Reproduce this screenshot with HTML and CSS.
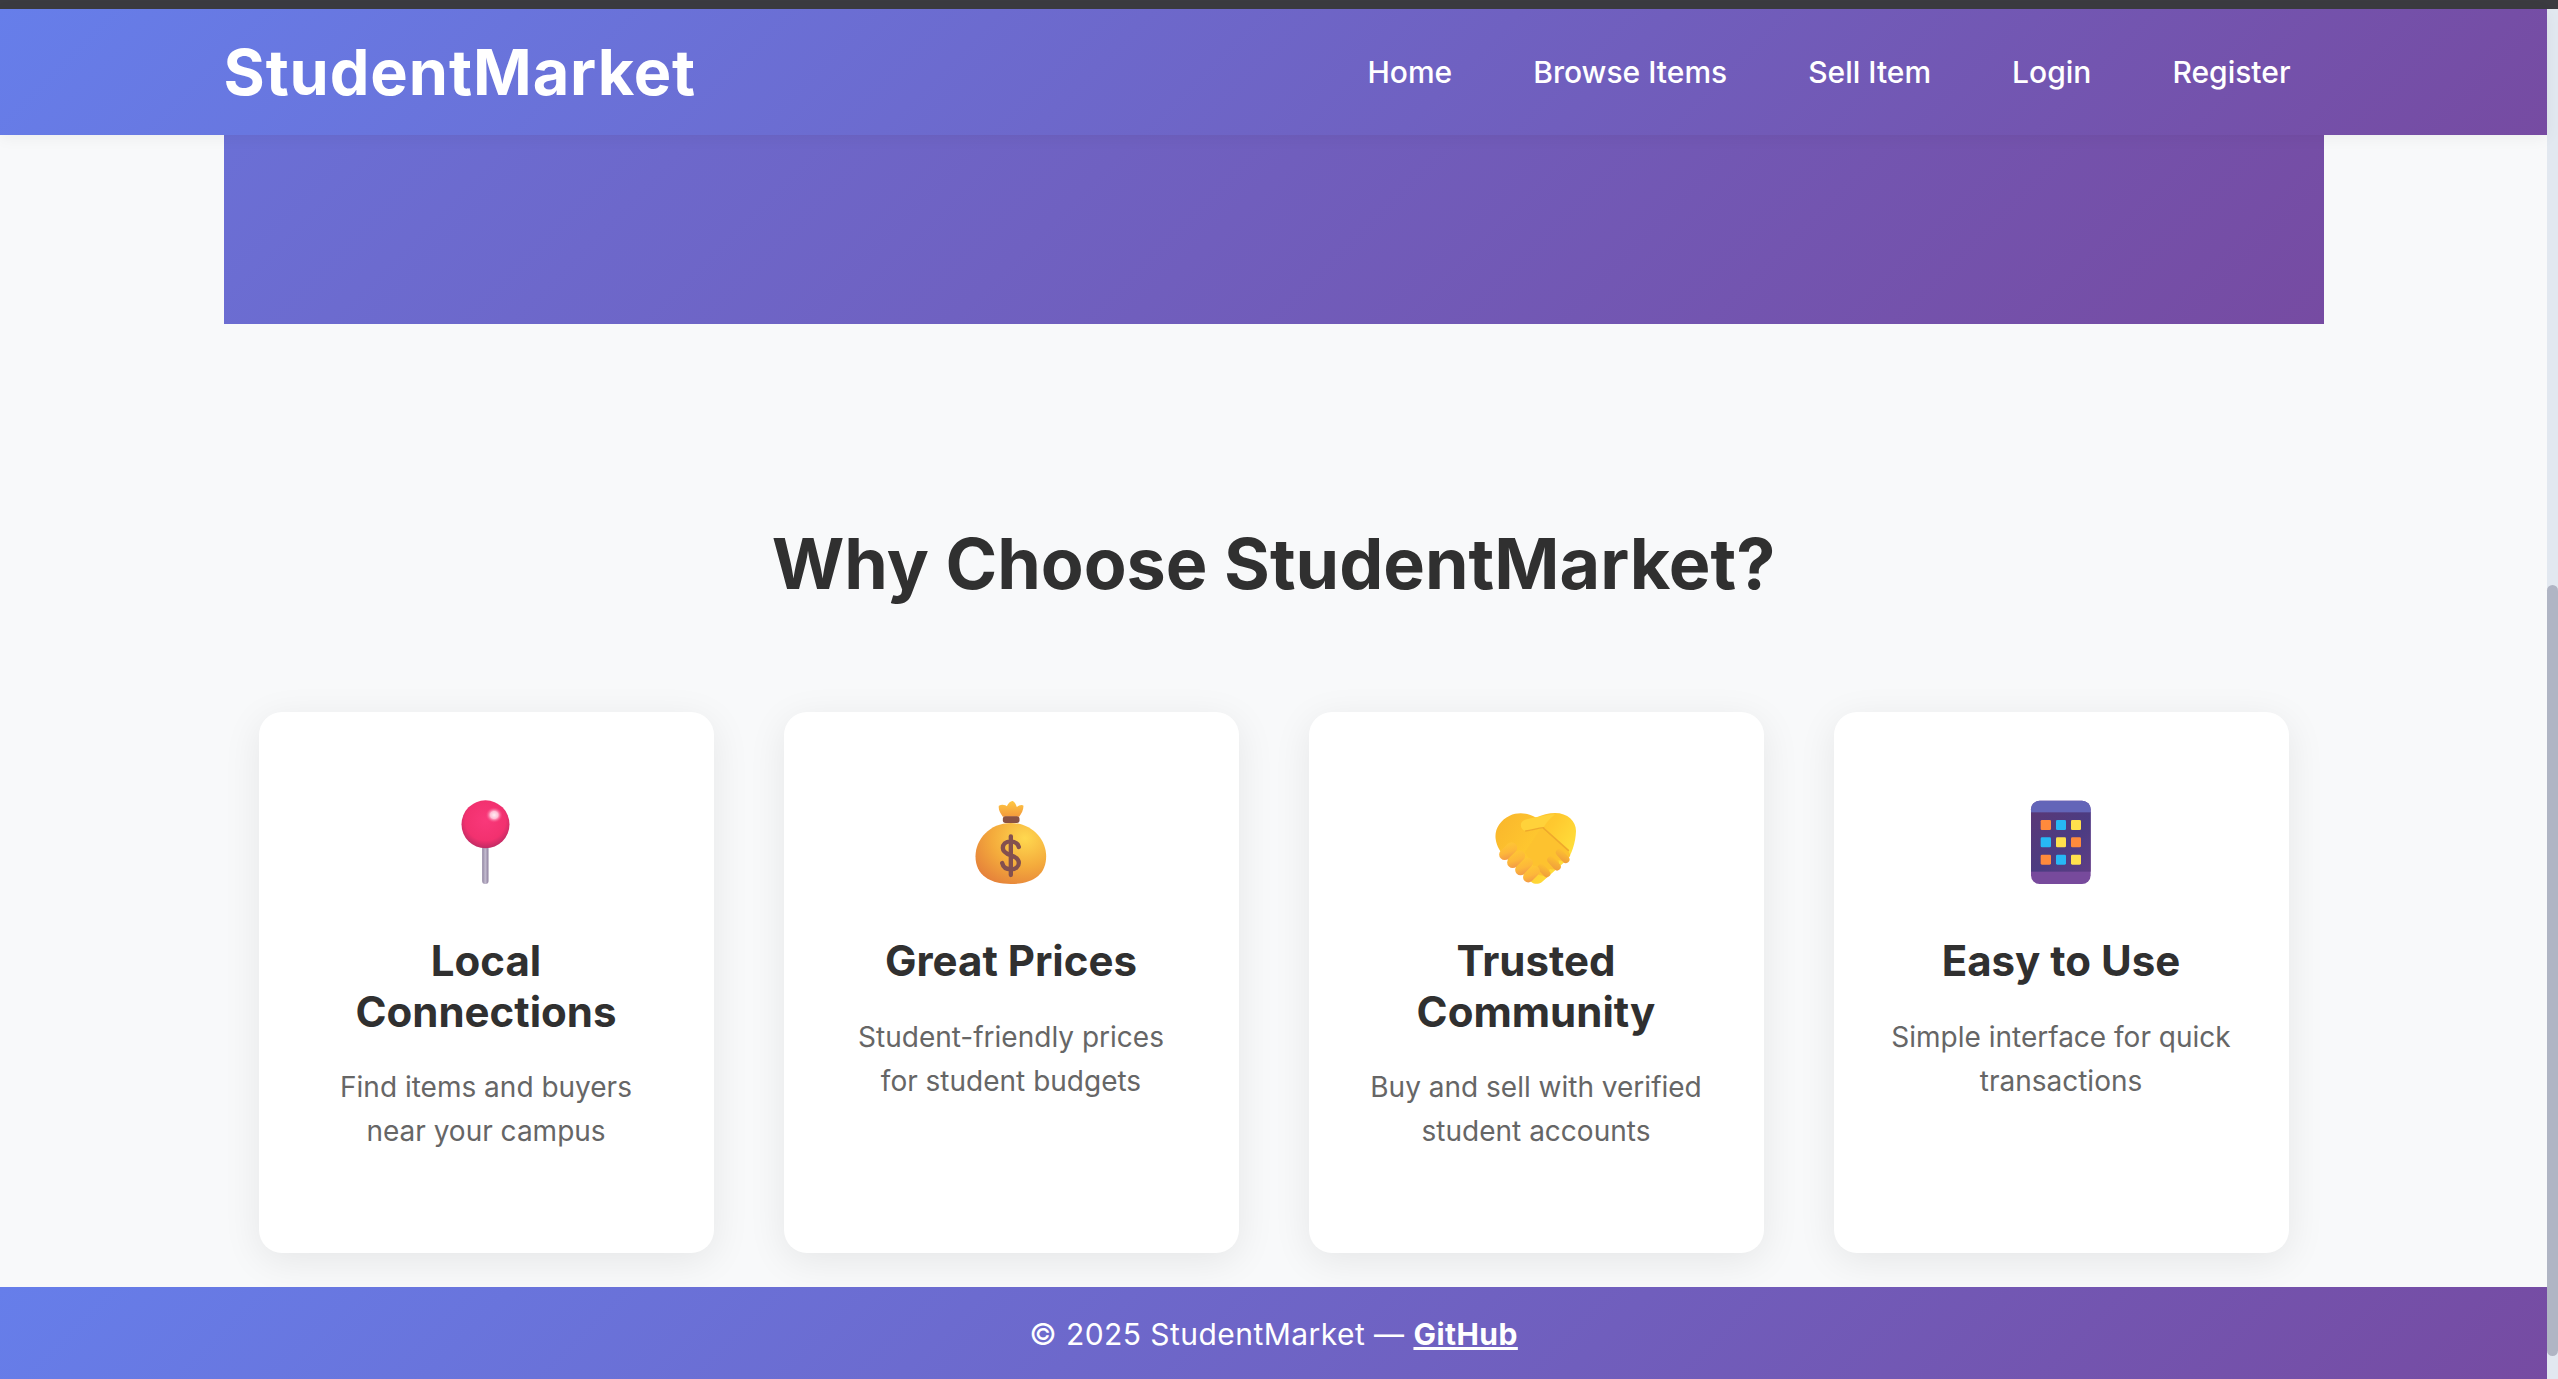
FILE: index.html
```html
<!DOCTYPE html>
<html lang="en">
<head>
  <meta charset="UTF-8">
  <meta name="viewport" content="width=device-width, initial-scale=1.0">
  <title>StudentMarket</title>
  <link rel="stylesheet" href="styles.css">
</head>
<body>
  <div class="window-edge"></div>
  <div class="viewport">
    <div class="page">
      <header class="site-header">
        <div class="header-inner">
          <a class="logo" href="#">StudentMarket</a>
          <nav class="nav">
            <a href="#">Home</a>
            <a href="#">Browse Items</a>
            <a href="#">Sell Item</a>
            <a href="#">Login</a>
            <a href="#">Register</a>
          </nav>
        </div>
      </header>

      <main class="main">
        <div class="hero"></div>

        <section class="features">
          <h2 class="features-title">Why Choose StudentMarket?</h2>
          <div class="feature-grid">
            <div class="card">
              <svg class="card-icon" viewBox="55.5 54 288 288" aria-hidden="true">
                <defs>
                  <linearGradient id="pinStem" x1="0" x2="1" y1="0" y2="0">
                    <stop offset="0" stop-color="#8f84a0"/>
                    <stop offset=".5" stop-color="#c3bbcf"/>
                    <stop offset="1" stop-color="#8d7f9e"/>
                  </linearGradient>
                  <radialGradient id="pinBall" cx=".5" cy=".42" r=".6">
                    <stop offset="0" stop-color="#f9387a"/>
                    <stop offset=".7" stop-color="#f2316f"/>
                    <stop offset="1" stop-color="#b92a62"/>
                  </radialGradient>
                  <radialGradient id="pinShine">
                    <stop offset="0" stop-color="#ffeef4"/>
                    <stop offset=".45" stop-color="#ffc0d6"/>
                    <stop offset="1" stop-color="#f9387a" stop-opacity="0"/>
                  </radialGradient>
                </defs>
                <rect x="188" y="200" width="19" height="115" rx="9" fill="url(#pinStem)"/>
                <circle cx="198" cy="136" r="72" fill="url(#pinBall)"/>
                <ellipse cx="224" cy="108" rx="26" ry="24" fill="url(#pinShine)"/>
              </svg>
              <h3>Local Connections</h3>
              <p>Find items and buyers near your campus</p>
            </div>

            <div class="card">
              <svg class="card-icon" viewBox="40.5 54 288 288" aria-hidden="true">
                <defs>
                  <radialGradient id="bagBody" cx=".7" cy=".25" r=".85">
                    <stop offset="0" stop-color="#ffd84f"/>
                    <stop offset=".55" stop-color="#f4ab3c"/>
                    <stop offset="1" stop-color="#e5813a"/>
                  </radialGradient>
                  <linearGradient id="bagKnot" x1="0" x2="0" y1="0" y2="1">
                    <stop offset="0" stop-color="#ffc843"/>
                    <stop offset="1" stop-color="#f39a3c"/>
                  </linearGradient>
                </defs>
                <path d="M184 132C120 132 78 182 78 232C78 288 120 315 184 315C250 315 290 288 290 232C290 182 248 132 184 132Z" fill="url(#bagBody)"/>
                <path d="M160 113C152 102 146 92 148 80C160 74 170 80 172 82C176 72 184 65 190 66C197 70 200 78 202 84C208 80 216 76 222 80C222 92 216 104 209 113Z" fill="url(#bagKnot)"/>
                <rect x="160" y="112" width="50" height="20" rx="8" fill="#8a5243"/>
                <path d="M208 204C204 192 194 187 183 187C168 187 160 197 160 207C160 218 170 224 184 229C198 234 208 240 208 252C208 263 198 271 184 271C171 271 161 265 158 252M184 172V288" fill="none" stroke="#83504f" stroke-width="13" stroke-linecap="round"/>
              </svg>
              <h3>Great Prices</h3>
              <p>Student-friendly prices for student budgets</p>
            </div>

            <div class="card">
              <svg class="card-icon" viewBox="39 24 288 288" aria-hidden="true">
                <defs>
                  <linearGradient id="handBack" x1="0" x2="1" y1="0" y2=".6">
                    <stop offset="0" stop-color="#f9b52c"/>
                    <stop offset=".6" stop-color="#ffc92f"/>
                    <stop offset="1" stop-color="#ffe23d"/>
                  </linearGradient>
                  <linearGradient id="finger" x1="1" x2="0" y1="0" y2="1">
                    <stop offset="0" stop-color="#ffc933"/>
                    <stop offset=".55" stop-color="#fdb73a"/>
                    <stop offset="1" stop-color="#f0924a"/>
                  </linearGradient>
                  <linearGradient id="fingerRight" x1="0" x2="1" y1="0" y2="1">
                    <stop offset="0" stop-color="#ffc42f"/>
                    <stop offset="1" stop-color="#ee9a3e"/>
                  </linearGradient>
                </defs>
                <path d="M184 86C160 72 130 68 104 80C74 94 58 122 62 150C65 172 76 190 92 206L170 280C178 286 190 286 200 280L272 216C290 200 302 160 303 126C303 96 278 72 240 72C222 72 200 78 184 86Z" fill="url(#handBack)"/>
                <path d="M150 190L198 118L278 182L286 198C280 214 262 218 250 214C258 232 240 246 224 240C222 258 204 266 190 256Z" fill="#fdc22f"/>
                <path d="M206 118L280 184" fill="none" stroke="#efa92c" stroke-width="5" stroke-linecap="round"/>
                <path d="M150 92C170 88 205 78 240 76C222 92 214 100 206 116C186 118 170 124 152 126C134 122 132 98 150 92Z" fill="#ffd23a"/>
                <path d="M152 126C170 124 186 118 206 116" fill="none" stroke="#efa92c" stroke-width="4" stroke-linecap="round"/>
                <g fill="url(#fingerRight)">
                  <rect x="238" y="190" width="50" height="22" rx="11" transform="rotate(48 263 201)"/>
                  <rect x="212" y="212" width="50" height="22" rx="11" transform="rotate(48 237 223)"/>
                  <rect x="184" y="234" width="46" height="22" rx="11" transform="rotate(48 207 245)"/>
                </g>
                <g fill="url(#finger)">
                  <rect x="140" y="240" width="58" height="31" rx="15" transform="rotate(-45 169 255)"/>
                  <rect x="116" y="216" width="62" height="32" rx="16" transform="rotate(-45 147 232)"/>
                  <rect x="92" y="194" width="62" height="33" rx="16" transform="rotate(-45 123 210)"/>
                  <rect x="68" y="170" width="62" height="33" rx="16" transform="rotate(-45 99 186)"/>
                </g>
              </svg>
              <h3>Trusted Community</h3>
              <p>Buy and sell with verified student accounts</p>
            </div>

            <div class="card">
              <svg class="card-icon" viewBox="39 54 288 288" aria-hidden="true">
                <defs>
                  <linearGradient id="phoneScreen" x1="0" x2="1" y1="0" y2="1">
                    <stop offset="0" stop-color="#5a3877"/>
                    <stop offset=".55" stop-color="#4b3c82"/>
                    <stop offset="1" stop-color="#5f3d84"/>
                  </linearGradient>
                </defs>
                <rect x="93" y="65" width="179" height="250" rx="26" fill="#774a9c"/>
                <path d="M93 102V91C93 76 105 65 119 65H246C260 65 272 76 272 91V102Z" fill="#6365b8"/>
                <rect x="93" y="100" width="179" height="178" fill="url(#phoneScreen)"/>
                <rect x="122" y="123" width="31" height="30" rx="4" fill="#ff8a3c"/>
                <rect x="168" y="123" width="30" height="30" rx="4" fill="#27b8f5"/>
                <rect x="213" y="123" width="30" height="30" rx="4" fill="#ffe04d"/>
                <rect x="122" y="175" width="31" height="30" rx="4" fill="#27b8f5"/>
                <rect x="168" y="175" width="30" height="30" rx="4" fill="#ffe04d"/>
                <rect x="213" y="175" width="30" height="30" rx="4" fill="#ff8a3c"/>
                <rect x="122" y="227" width="31" height="30" rx="4" fill="#ff8a3c"/>
                <rect x="168" y="227" width="30" height="30" rx="4" fill="#27b8f5"/>
                <rect x="213" y="227" width="30" height="30" rx="4" fill="#ffe04d"/>
              </svg>
              <h3>Easy to Use</h3>
              <p>Simple interface for quick transactions</p>
            </div>
          </div>
        </section>
      </main>

      <footer class="site-footer">
        <p>© 2025 StudentMarket — <a href="#">GitHub</a></p>
      </footer>
    </div>

    <div class="scrollbar">
      <div class="scrollbar-thumb"></div>
    </div>
  </div>
</body>
</html>
```

FILE: styles.css
```css
* {
  box-sizing: border-box;
}

html, body {
  height: 100%;
}

body {
  margin: 0;
  display: flex;
  flex-direction: column;
  overflow: hidden;
  font-family: Inter, "Liberation Sans", sans-serif;
  background-color: #f8f9fa;
  color: #303030;
}

a {
  color: inherit;
  text-decoration: none;
}

.window-edge {
  height: 9px;
  flex-shrink: 0;
  background-color: #3b3b40;
}

.viewport {
  flex: 1;
  display: flex;
  min-height: 0;
}

.page {
  flex: 1;
  display: flex;
  flex-direction: column;
  min-width: 0;
}

/* header */
.site-header {
  position: relative;
  z-index: 2;
  flex-shrink: 0;
  height: 126px;
  background: linear-gradient(135deg, #667eea 0%, #764ba2 100%);
  box-shadow: 0 3px 15px rgba(0, 0, 0, 0.05);
}

.header-inner {
  width: 2100px;
  height: 100%;
  margin: 0 auto;
  display: flex;
  align-items: center;
  justify-content: space-between;
}

.logo {
  font-size: 63px;
  font-weight: 700;
  letter-spacing: 0.9px;
  color: #fff;
}

.nav {
  display: flex;
  gap: 81px;
  padding-right: 33px;
}

.nav a {
  font-size: 30px;
  font-weight: 500;
  color: #fff;
}

/* hero, scrolled mostly out of view */
.main {
  flex: 1;
  width: 2100px;
  margin: 0 auto;
}

.hero {
  height: 189px;
  background: linear-gradient(135deg, #667eea 0%, #764ba2 100%) bottom / 100% 1100px no-repeat;
}

/* features */
.features {
  padding: 193px 35px 34px;
}

.features-title {
  margin: 0 0 101px;
  font-size: 70px;
  line-height: 94px;
  font-weight: 700;
  text-align: center;
  color: #303030;
}

.feature-grid {
  display: grid;
  grid-template-columns: repeat(4, 1fr);
  gap: 70px;
}

.card {
  padding: 85px 54px 100px;
  background-color: #fff;
  border-radius: 23px;
  box-shadow: 0 8px 38px rgba(0, 0, 0, 0.08);
  text-align: center;
}

.card-icon {
  display: block;
  width: 96px;
  height: 96px;
  margin: 0 auto 43px;
}

.card h3 {
  margin: 0 0 28px;
  font-size: 42px;
  line-height: 50.5px;
  font-weight: 700;
  color: #303030;
}

.card p {
  margin: 0;
  font-size: 28px;
  line-height: 44px;
  color: #666;
}

/* footer */
.site-footer {
  flex-shrink: 0;
  height: 92px;
  padding-top: 1px;
  display: flex;
  align-items: center;
  justify-content: center;
  background: linear-gradient(135deg, #667eea 0%, #764ba2 100%);
  color: #fff;
  font-size: 30px;
  letter-spacing: 0.45px;
}

.site-footer p {
  margin: 0;
}

.site-footer a {
  font-weight: 700;
  text-decoration: underline;
}

/* scrollbar track */
.scrollbar {
  flex-shrink: 0;
  width: 11px;
  padding-top: 576px;
  background-color: #e2e8f0;
}

.scrollbar-thumb {
  height: 771px;
  background-color: #b0b5c4;
  border-radius: 6px;
}
```
